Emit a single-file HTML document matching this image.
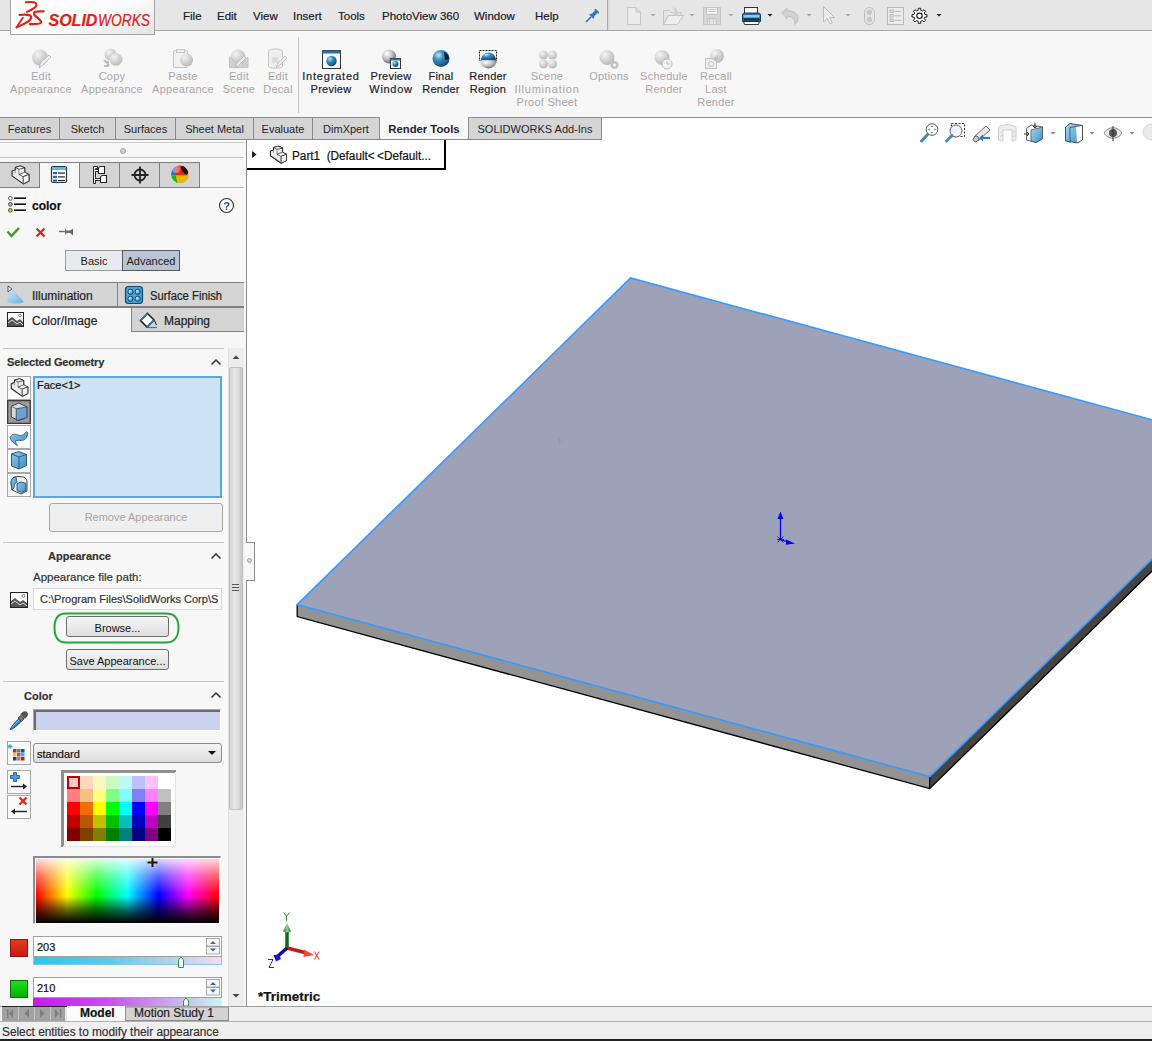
<!DOCTYPE html>
<html><head><meta charset="utf-8">
<style>
*{box-sizing:border-box;margin:0;padding:0}
html,body{width:1152px;height:1041px;overflow:hidden;background:#fff;font-family:"Liberation Sans",sans-serif;font-size:11px;color:#1a1a2a}
.a{position:absolute}
.t{position:absolute;white-space:pre;line-height:1;-webkit-text-stroke:0.2px currentColor}
#menubar{left:0;top:0;width:1152px;height:31px;background:#e6e6e6;border-bottom:1px solid #a9a9a9}
#logo{left:10px;top:-1px;width:145px;height:36px;background:linear-gradient(160deg,#ffffff 0%,#fbfbfb 55%,#e4e4e4 100%);border:1px solid #a6a6a6;border-top:none}
#cmd{left:0;top:31px;width:1152px;height:87px;background:#f7f7f7;border-bottom:1px solid #8d8d8d}
.cm{position:absolute;top:71px;text-align:center;line-height:13px;font-size:11px;white-space:pre;letter-spacing:0.25px;-webkit-text-stroke:0.2px currentColor}
.dis{color:#aaa5a8;-webkit-text-stroke:0 !important}
.en{color:#1e1e2e}
.tab{position:absolute;top:118px;height:22px;background:#d5d5d5;border:1px solid #8a8a8a;border-top:none;border-left:none;font-size:11px;text-align:center;line-height:23px;color:#1e1e2e}
#panel{left:0;top:140px;width:247px;height:866px;background:#f7f7f7;border-right:1px solid #8c8c8c}
#gfx{left:247px;top:118px;width:905px;height:888px;background:#fff}
#btabs{left:0;top:1006px;width:1152px;height:16px;background:#f0f0f0;border-top:1px solid #a0a0a0}
#status{left:0;top:1021px;width:1152px;height:20px;background:#f0f0f0;border-top:1px solid #b0b0b0;border-bottom:2px solid #222}
</style></head><body>

<!-- graphics -->
<div id="gfx" class="a"></div>
<!-- menu bar -->
<div id="menubar" class="a"></div>
<div class="a" style="left:607px;top:0;width:1px;height:30px;background:#a8a8a8"></div><div class="a" style="left:608px;top:0;width:3px;height:30px;background:linear-gradient(90deg,#d8d8d8,#e6e6e6)"></div>

<!-- command manager -->
<div id="cmd" class="a"></div>
<div id="logo" class="a"></div>
<div class="a" style="left:298px;top:37px;width:1px;height:76px;background:#c8c8c8"></div>

<!-- logo -->
<svg class="a" style="left:10px;top:0" width="40" height="32" viewBox="10 0 40 32">
  <g fill="none" stroke="#dc2318" stroke-linecap="round" stroke-linejoin="round">
    <path d="M25.8,2.3 C29.5,1.9 33.5,1.7 35.4,2.8 C37.3,4 36.5,6.3 34,8.1 C31.5,9.8 29.2,10.9 27,11.9" stroke-width="2.1"/>
    <path d="M19.6,15 C23.5,14.6 28,14.4 30.3,15.7 C32,16.8 31.3,19.3 28.3,21.4 C24.8,23.8 20.5,25.8 16.6,27.3" stroke-width="2.2"/>
    <path d="M22.8,17.8 L16.6,27.3" stroke-width="1.8"/>
    <path d="M43.6,11.4 C40,11.2 36.5,11.2 34.8,12 C33.2,13 34,15 36.5,17 C39,19 41.6,20.6 41,22.6 C40.4,24.1 37,24.2 30,24" stroke-width="2.3"/>
  </g>
</svg>
<div class="t" style="left:48.5px;top:12.5px;font-size:16px;font-weight:bold;font-style:italic;color:#dc2318;transform:scaleX(1.0);transform-origin:0 0">SOLID</div>
<div class="t" style="left:97.5px;top:12.5px;font-size:16px;font-style:italic;color:#dc2318;transform:scaleX(0.86);transform-origin:0 0">WORKS</div>

<!-- menu -->
<div class="t" style="left:183px;top:11px;font-size:11.5px">File</div>
<div class="t" style="left:217px;top:11px;font-size:11.5px">Edit</div>
<div class="t" style="left:253px;top:11px;font-size:11.5px">View</div>
<div class="t" style="left:293px;top:11px;font-size:11.5px">Insert</div>
<div class="t" style="left:338px;top:11px;font-size:11.5px">Tools</div>
<div class="t" style="left:382px;top:11px;font-size:11.5px">PhotoView 360</div>
<div class="t" style="left:474px;top:11px;font-size:11.5px">Window</div>
<div class="t" style="left:535px;top:11px;font-size:11.5px">Help</div>
<svg class="a" style="left:585px;top:8px" width="15" height="15" viewBox="0 0 15 15">
  <path d="M1,14 L6,9" stroke="#2a6fb5" stroke-width="1.6"/>
  <path d="M4,6.5 L8.5,11 L9.5,8 L12.5,5 L13.8,5.8 L14,4 L11,1 L9.2,1.2 L10,2.5 L7,5.5 Z" fill="#2f78c4"/>
</svg>

<!-- quick access -->
<svg class="a" style="left:620px;top:4px" width="330" height="24" viewBox="620 4 330 24">
  <g fill="#ececec" stroke="#c4c4c4" stroke-width="1">
    <path d="M627.5,7.5 H636 L640.5,12 V24.5 H627.5 Z"/>
    <path d="M636,7.5 V12 H640.5" fill="#dcdcdc"/>
    <path d="M663.5,10.5 H669 L671,12.5 H681 V15.5 H668 L663.5,24.5 Z" fill="#e6e6e6"/>
    <path d="M668.5,15.5 H683.5 L677.5,24.5 H663.5 Z" fill="#efefef"/>
    <path d="M703.5,7.5 H720.5 V24.5 H703.5 Z" fill="#d8d8d8"/>
    <path d="M706.5,7.5 H717.5 V14.5 H706.5 Z" fill="#f4f4f4"/>
    <path d="M707.5,18.5 H716.5 V24.5 H707.5 Z" fill="#e4e4e4"/>
  </g>
  <path d="M707.5,9.5 H716.5 M707.5,11.5 H716.5 M709.5,19 V24 M713.5,19 V24" stroke="#c4c4c4" stroke-width="0.8"/>
  <path d="M673,7 C676,7.5 677.5,9.5 677.5,12 L680,12 L676,16 L672,12 L674.5,12 C674.5,10 674,8.5 673,7 Z" fill="#cfcfcf"/>
  <path d="M782,12.5 L787,8 V10.8 C793,10.5 798,13.5 798,18 C798,21 796.5,23 794.5,24.5 C795.5,21.5 794,16.5 787,16.2 V19 Z" fill="#d2d2d2" stroke="#b8b8b8" stroke-width="0.8" stroke-linejoin="round"/>
  <path d="M823.5,6.5 V22 L827,18.5 L830,24 L832.3,23 L829.5,17.5 H834.5 Z" fill="#ededed" stroke="#b4b4b4" stroke-width="0.9" stroke-linejoin="round"/>
  <rect x="864.5" y="7.5" width="10" height="17" rx="5" fill="#e4e4e4" stroke="#c0c0c0" stroke-width="1"/>
  <circle cx="869.5" cy="12.3" r="2.5" fill="#c8c8c8"/><circle cx="869.5" cy="19.5" r="2.5" fill="#c8c8c8"/>
  <rect x="887.5" y="7.5" width="16" height="17" fill="#ececec" stroke="#b8b8b8" stroke-width="1"/>
  <g fill="#e0e0e0" stroke="#b0b0b0" stroke-width="0.8"><rect x="890" y="10" width="3.2" height="2.6"/><rect x="890" y="14.5" width="3.2" height="2.6"/><rect x="890" y="19" width="3.2" height="2.6"/></g>
  <path d="M894.5,11.3 H901 M894.5,15.8 H901 M894.5,20.3 H901" stroke="#b0b0b0" stroke-width="0.9"/>
  <!-- printer -->
  <rect x="744.5" y="7.5" width="13" height="7" fill="#f6f6f6" stroke="#333" stroke-width="1"/>
  <path d="M742.5,15 C742.5,13.5 743.5,13 745,13 H758 C759.5,13 760.5,13.5 760.5,15 V21.5 H742.5 Z" fill="#2a6ea8" stroke="#0f3050" stroke-width="0.9"/>
  <rect x="743.5" y="15" width="16" height="2.5" fill="#8ccbf0"/>
  <rect x="743.5" y="18.5" width="16" height="2" fill="#0c2a44"/>
  <path d="M743.5,21.5 H759.5 L758.5,24.5 H744.5 Z" fill="#fff" stroke="#222" stroke-width="0.9"/>
  <!-- gear -->
  <path d="M927.01,14.61 L927.01,16.99 L924.95,17.11 L924.27,18.73 L925.65,20.27 L923.97,21.95 L922.43,20.57 L920.81,21.25 L920.69,23.31 L918.31,23.31 L918.19,21.25 L916.57,20.57 L915.03,21.95 L913.35,20.27 L914.73,18.73 L914.05,17.11 L911.99,16.99 L911.99,14.61 L914.05,14.49 L914.73,12.87 L913.35,11.33 L915.03,9.65 L916.57,11.03 L918.19,10.35 L918.31,8.29 L920.69,8.29 L920.81,10.35 L922.43,11.03 L923.97,9.65 L925.65,11.33 L924.27,12.87 L924.95,14.49 Z" fill="#fafafa" stroke="#1a1a1a" stroke-width="1" stroke-linejoin="round"/>
  <circle cx="919.5" cy="15.8" r="2.7" fill="none" stroke="#1a1a1a" stroke-width="1.1"/>
  <g fill="#a8a8a8">
    <path d="M650.5,14 h5 l-2.5,2.5z M689.5,14 h5 l-2.5,2.5z M728.5,14 h5 l-2.5,2.5z M806.5,14 h5 l-2.5,2.5z M845.5,14 h5 l-2.5,2.5z"/>
  </g>
  <path d="M767.5,14 h5 l-2.5,2.5z M936.5,14 h5 l-2.5,2.5z" fill="#222"/>
</svg>

<!-- command manager buttons -->
<svg class="a" style="left:0;top:40px" width="760" height="32" viewBox="0 40 760 32">
  <defs>
    <radialGradient id="gs" cx="0.35" cy="0.3" r="0.75"><stop offset="0" stop-color="#f4f4f4"/><stop offset="0.6" stop-color="#cfcfcf"/><stop offset="1" stop-color="#b8b8b8"/></radialGradient>
    <radialGradient id="bs" cx="0.35" cy="0.3" r="0.8"><stop offset="0" stop-color="#bfe6ff"/><stop offset="0.35" stop-color="#3c8fc4"/><stop offset="1" stop-color="#0d3d66"/></radialGradient>
    <radialGradient id="ws" cx="0.35" cy="0.3" r="0.8"><stop offset="0" stop-color="#ffffff"/><stop offset="0.5" stop-color="#bdbdbd"/><stop offset="1" stop-color="#555"/></radialGradient>
  </defs>
  <!-- Edit Appearance -->
  <circle cx="40" cy="57.5" r="8" fill="url(#gs)"/>
  <path d="M39,68 L41,62 L49,55 L51,57 L43,65 Z" fill="#eee" stroke="#bdbdbd" stroke-width="1"/>
  <!-- Copy Appearance -->
  <circle cx="110.5" cy="54.5" r="6" fill="url(#gs)"/>
  <circle cx="116" cy="59.5" r="6.3" fill="url(#gs)" stroke="#ddd" stroke-width="0.6"/>
  <path d="M104,60 L109,65 M108,61 V66 H104" stroke="#bdbdbd" stroke-width="2" fill="none"/>
  <!-- Paste Appearance -->
  <rect x="173.5" y="50.5" width="14" height="17" rx="1.5" fill="#f1f1f1" stroke="#c4c4c4"/>
  <rect x="176.5" y="49.5" width="8" height="3" fill="#eee" stroke="#c4c4c4"/>
  <circle cx="186.5" cy="60" r="6.5" fill="url(#gs)"/>
  <!-- Edit Scene -->
  <circle cx="238" cy="57" r="7.5" fill="url(#gs)"/>
  <path d="M229.5,57 V67.5 H248 V57 L243,63 L238.5,67 L234,61 Z" fill="#cfcfcf" stroke="#c4c4c4"/>
  <path d="M235,68 L237,63 L244,56 L246,58 L239,65 Z" fill="#eee" stroke="#bdbdbd"/>
  <!-- Edit Decal -->
  <path d="M268.5,51.5 C268.5,48 282.5,48 282.5,51.5 V66 C282.5,69 268.5,69 268.5,66 Z" fill="#eee" stroke="#c8c8c8"/>
  <rect x="272" y="57" width="6" height="6" fill="#ddd"/>
  <path d="M276,68 L278,63 L285,56 L287,58 L280,65 Z" fill="#eee" stroke="#bdbdbd"/>
  <!-- Integrated Preview -->
  <rect x="322.5" y="50.5" width="18" height="18" fill="#f7f7f7" stroke="#333" stroke-width="1"/>
  <rect x="322.5" y="50.5" width="18" height="3" fill="#2f6fa8"/>
  <circle cx="331.5" cy="61" r="5.2" fill="url(#bs)"/>
  <!-- Preview Window -->
  <circle cx="389" cy="56.5" r="7" fill="url(#ws)"/>
  <rect x="390.5" y="58.5" width="10" height="10" fill="#f7f7f7" stroke="#333"/>
  <rect x="390.5" y="58.5" width="10" height="2" fill="#2f6fa8"/>
  <circle cx="395.5" cy="64" r="3" fill="url(#bs)"/>
  <!-- Final Render -->
  <circle cx="441" cy="58.5" r="8.5" fill="url(#bs)"/>
  <path d="M444,52 C447,53 449,56 449,59 L445,60 Z" fill="#0b1f33"/>
  <!-- Render Region -->
  <rect x="479.5" y="50.5" width="17" height="10" fill="none" stroke="#222" stroke-dasharray="2,1"/>
  <path d="M480,60 A8.5,8.5 0 0 0 497,60 Z" fill="url(#ws)"/>
  <path d="M481,60 A7.5,7.5 0 0 1 496,60 Z" fill="url(#bs)"/>
  <!-- Scene Illumination -->
  <circle cx="543.5" cy="55" r="4.5" fill="url(#gs)"/><circle cx="552.5" cy="55" r="4.5" fill="url(#gs)"/>
  <circle cx="543.5" cy="64" r="4.5" fill="url(#gs)"/><circle cx="552.5" cy="64" r="4.5" fill="url(#gs)"/>
  <!-- Options -->
  <circle cx="607" cy="57.5" r="7.5" fill="url(#gs)"/>
  <circle cx="614.5" cy="65" r="4" fill="#c4c4c4"/><circle cx="614.5" cy="65" r="1.6" fill="#f5f5f5"/>
  <!-- Schedule Render -->
  <circle cx="662" cy="57.5" r="7.5" fill="url(#gs)"/>
  <circle cx="667" cy="64" r="5" fill="#f3f3f3" stroke="#bdbdbd"/>
  <path d="M667,61 V64 H670" stroke="#bdbdbd" fill="none"/>
  <!-- Recall Last Render -->
  <circle cx="717" cy="56" r="7" fill="url(#gs)"/>
  <rect x="705.5" y="58.5" width="11" height="10" fill="#eee" stroke="#c4c4c4"/>
  <circle cx="711" cy="64" r="2.5" fill="none" stroke="#c4c4c4"/>
  <path d="M712,59 L718,55 V63 Z" fill="#c4c4c4"/>
</svg>
<div class="cm dis" style="left:1px;width:80px;top:70px">Edit
Appearance</div>
<div class="cm dis" style="left:72px;width:80px;top:70px">Copy
Appearance</div>
<div class="cm dis" style="left:143px;width:80px;top:70px">Paste
Appearance</div>
<div class="cm dis" style="left:219px;width:40px;top:70px">Edit
Scene</div>
<div class="cm dis" style="left:258px;width:40px;top:70px">Edit
Decal</div>
<div class="cm en" style="left:301px;width:60px;top:70px"><span style="letter-spacing:0.8px">Integrated</span>
Preview</div>
<div class="cm en" style="left:361px;width:60px;top:70px">Preview
<span style="letter-spacing:0.7px">Window</span></div>
<div class="cm en" style="left:416px;width:50px;top:70px">Final
Render</div>
<div class="cm en" style="left:463px;width:50px;top:70px">Render
Region</div>
<div class="cm dis" style="left:507px;width:80px;top:70px">Scene
<span style="letter-spacing:0.8px">Illumination</span>
Proof Sheet</div>
<div class="cm dis" style="left:579px;width:60px;top:70px">Options</div>
<div class="cm dis" style="left:634px;width:60px;top:70px">Schedule
Render</div>
<div class="cm dis" style="left:686px;width:60px;top:70px">Recall
Last
Render</div>

<!-- tabs -->
<div class="tab" style="left:0;width:60px">Features</div>
<div class="tab" style="left:60px;width:56px">Sketch</div>
<div class="tab" style="left:116px;width:60px">Surfaces</div>
<div class="tab" style="left:176px;width:78px">Sheet Metal</div>
<div class="tab" style="left:254px;width:59px">Evaluate</div>
<div class="tab" style="left:313px;width:67px">DimXpert</div>
<div class="tab" style="left:380px;width:89px;background:#f7f7f7;font-weight:bold;font-size:11.3px;border-bottom:1px solid #8a8a8a">Render Tools</div>
<div class="a" style="left:380px;top:117px;width:88px;height:1px;background:#f7f7f7"></div>
<div class="tab" style="left:469px;width:133px">SOLIDWORKS Add-Ins</div>


<!-- panel -->
<div id="panel" class="a"></div>
<!-- panel top -->
<div class="a" style="left:0;top:141px;width:244px;height:1px;background:#fdfdfd"></div>
<div class="a" style="left:0;top:142px;width:244px;height:1px;background:#c9c9c9"></div>
<div class="a" style="left:119.5px;top:147.5px;width:6px;height:6px;border-radius:50%;background:#d0d0d0;border:1px solid #a8a8a8"></div>
<div class="a" style="left:0;top:157px;width:244px;height:1px;background:#c4c4c4"></div>
<div class="a" style="left:0;top:158px;width:244px;height:1px;background:#fdfdfd"></div>
<!-- PM tabs -->
<div class="a" style="left:0;top:162px;width:200px;height:26px;background:#d4d4d4;border-top:1px solid #808080;border-bottom:1px solid #808080"></div>
<div class="a" style="left:200px;top:187px;width:44px;height:1px;background:#b8b8b8"></div>
<div class="a" style="left:39px;top:162px;width:1px;height:26px;background:#808080"></div>
<div class="a" style="left:40px;top:163px;width:39px;height:25px;background:#f7f7f7"></div>
<div class="a" style="left:79px;top:162px;width:1px;height:26px;background:#808080"></div>
<div class="a" style="left:119px;top:162px;width:1px;height:26px;background:#808080"></div>
<div class="a" style="left:159px;top:162px;width:1px;height:26px;background:#808080"></div>
<div class="a" style="left:199px;top:162px;width:1px;height:26px;background:#808080"></div>
<svg class="a" style="left:0;top:160px" width="200" height="30" viewBox="0 160 200 30">
  <defs>
    <radialGradient id="dm" cx="0.3" cy="0.3" r="0.8"><stop offset="0" stop-color="#ffffff" stop-opacity="0.6"/><stop offset="0.5" stop-color="#ffffff" stop-opacity="0"/><stop offset="1" stop-color="#000" stop-opacity="0.25"/></radialGradient>
  </defs>
  <!-- part icon -->
  <g transform="translate(7.4,162.6) scale(1.05)" stroke="#1e1e1e" stroke-width="1.00" stroke-linejoin="round">
    <path d="M4.4,8.3 L6,7.4 L7.4,6.9 L7.6,4.6 L12.2,3.2 L14.7,4.1 L16.6,5.1 L16.6,9.2 L18.4,10.4 L20.5,11.3 L20.5,17.5 L15.2,20.3 L4.4,12.7 Z" fill="#ececec"/>
    <path d="M7.6,4.6 L11,6.3 L16.6,5.1 L12.2,3.2 Z" fill="#f8f8f8" stroke-width="0.67"/>
    <path d="M11,11.3 L16.6,9.2 L20.5,11.3 L15,13.4 Z" fill="#fafafa" stroke-width="0.67"/>
    <path d="M15,13.4 L20.5,11.3 V17.5 L15.2,20.3 Z" fill="#f4f4f4" stroke-width="0.67"/>
    <path d="M11,6.3 V11.3 M15,13.4 V20.3 M7.4,6.9 V9.8" fill="none" stroke="#777" stroke-width="0.76"/>
  </g>
  <!-- PM icon -->
  <rect x="51.5" y="166.5" width="15" height="16" rx="1.5" fill="#fff" stroke="#1d3b55" stroke-width="1.2"/>
  <rect x="52" y="167" width="14" height="3" fill="#6fb3dc"/>
  <rect x="53" y="172" width="4" height="2.2" fill="#1f6a9a"/><rect x="58" y="172.5" width="7" height="1.2" fill="#222"/>
  <rect x="53" y="175.8" width="4" height="2.2" fill="#1f6a9a"/><rect x="58" y="176.3" width="7" height="1.2" fill="#222"/>
  <rect x="53" y="179.5" width="4" height="2.2" fill="#1f6a9a"/><rect x="58" y="180" width="7" height="1.2" fill="#222"/>
  <!-- config icon -->
  <path d="M93.5,166.5 H97.5 V168.5 H95.5 V169.5 H98.5 V171.5 H95.5 V178.5 H100.5 V180.5 H95.5 V183.5 H93.5 Z" fill="#fff" stroke="#222" stroke-width="1"/>
  <path d="M98.5,168.5 C98.5,167 99.5,166.5 101,166.5 H104.5 V173.5 H98.5 Z" fill="#fff" stroke="#222" stroke-width="1.1"/>
  <path d="M100.5,177.5 C100.5,176 101.5,175.5 103,175.5 H106.5 V182.5 H100.5 Z" fill="#fff" stroke="#222" stroke-width="1.1"/>
  <!-- dimxpert -->
  <g fill="none" stroke="#222">
    <circle cx="140" cy="175" r="5.5" stroke-width="1.8"/>
    <path d="M140,166.5 V183.5 M131.5,175 H148.5" stroke-width="1.8"/>
  </g>
  <!-- display manager -->
  <clipPath id="dmc"><circle cx="180" cy="174.3" r="8.8"/></clipPath>
  <g clip-path="url(#dmc)">
    <rect x="170" y="164" width="20" height="20" fill="#d9a56a"/>
    <path d="M170,164 H176.5 C176,168 175.8,172 176,175.5 H170 Z" fill="#2a6fc8"/>
    <path d="M176.5,164 H186 C184,168 185,172 187,175.5 H176 C175.8,172 176,168 176.5,164 Z" fill="#e02a1a"/>
    <path d="M170,175.5 H176 C176.5,179 177.5,182 179,185 H170 Z" fill="#10c010"/>
    <path d="M176,175.5 H189 C188.5,179 186,183 183,185 H179 C177.5,182 176.5,179 176,175.5 Z" fill="#e8b800"/>
    <ellipse cx="184.6" cy="170.2" rx="2.4" ry="4.8" transform="rotate(-35 184.6 170.2)" fill="#111"/>
    <circle cx="176" cy="169" r="4" fill="#fff" opacity="0.35"/>
  </g>
</svg>

<!-- header -->
<svg class="a" style="left:6px;top:194px" width="24" height="20" viewBox="6 194 24 20">
  <circle cx="10.4" cy="198.3" r="1.9" fill="#fff" stroke="#333" stroke-width="0.8"/>
  <circle cx="10.4" cy="204.3" r="1.9" fill="#7cc4ec" stroke="#333" stroke-width="0.8"/>
  <circle cx="10.4" cy="210.3" r="1.9" fill="#f5c400" stroke="#333" stroke-width="0.8"/>
  <rect x="14" y="197.4" width="12" height="1.6" fill="#111"/>
  <rect x="14" y="203.4" width="12" height="1.6" fill="#111"/>
  <rect x="14" y="209.4" width="12" height="1.6" fill="#111"/>
</svg>
<div class="t" style="left:32px;top:200px;font-size:12px;font-weight:bold;color:#111">color</div>
<svg class="a" style="left:218px;top:197px" width="17" height="17" viewBox="0 0 17 17">
  <circle cx="8.5" cy="8.5" r="7" fill="#fdfdfd" stroke="#333" stroke-width="1.1"/>
  <text x="8.5" y="12.6" text-anchor="middle" font-family="Liberation Sans" font-weight="bold" font-size="11" fill="#1f4f8a">?</text>
</svg>
<svg class="a" style="left:5px;top:224px" width="72" height="16" viewBox="5 224 72 16">
  <path d="M7.5,231.5 L11.5,236 L19,228" fill="none" stroke="#3f9a22" stroke-width="2.4"/>
  <path d="M36.5,228.5 L44.5,236.5 M44.5,228.5 L36.5,236.5" stroke="#e1251b" stroke-width="2.2"/>
  <path d="M59,231.5 H65" stroke="#6b6b6b" stroke-width="1.4"/>
  <path d="M65,228.5 L66.5,230.5 H70 L73,228.5 V235.5 L70,233 H66.5 L65,235" fill="#6b6b6b"/>
</svg>
<div class="a" style="left:65px;top:250px;width:58px;height:21px;background:#e7eaee;border:1px solid #9a9a9a;font-size:11px;line-height:21px;text-align:center;color:#222">Basic</div>
<div class="a" style="left:122px;top:250px;width:58px;height:21px;background:#b9c4d5;border:1px solid #555a62;font-size:11px;line-height:21px;text-align:center;color:#222">Advanced</div>

<!-- appearance tabs -->
<div class="a" style="left:0;top:282px;width:244px;height:26px;background:#d4d4d4;border-top:1px solid #808080;border-bottom:2px solid #808080"></div>
<div class="a" style="left:117px;top:282px;width:1px;height:25px;background:#808080"></div>
<div class="a" style="left:131px;top:308px;width:113px;height:24px;background:#d4d4d4;border-left:1px solid #808080;border-bottom:1px solid #808080"></div>
<div class="t" style="left:32px;top:290px;font-size:12px;color:#222">Illumination</div>
<div class="t" style="left:150px;top:290px;font-size:12px;color:#222;transform:scaleX(0.94);transform-origin:0 0">Surface Finish</div>
<div class="t" style="left:32px;top:315px;font-size:12px;color:#222">Color/Image</div>
<div class="t" style="left:164px;top:315px;font-size:12px;color:#222">Mapping</div>
<svg class="a" style="left:0;top:282px" width="244" height="50" viewBox="0 282 244 50">
  <defs>
    <linearGradient id="lb" x1="0" y1="0" x2="1" y2="1"><stop offset="0" stop-color="#cfe8f7"/><stop offset="1" stop-color="#5aaee0"/></linearGradient>
    <radialGradient id="sf" cx="0.3" cy="0.3" r="0.8"><stop offset="0" stop-color="#c8f0ff"/><stop offset="1" stop-color="#2a7fb0"/></radialGradient>
  </defs>
  <!-- illumination -->
  <path d="M8,286 L12,289 L8,292 Z" fill="#fff" stroke="#333" stroke-width="0.8"/>
  <path d="M8.5,292 L13,289.5 L24,302 C21,304 12,304 7,302.5 Z" fill="url(#lb)" opacity="0.9"/>
  <!-- surface finish -->
  <rect x="125.5" y="286.5" width="17" height="17" rx="3" fill="#4aa3d3" stroke="#0f4a6e" stroke-width="1.2"/>
  <circle cx="130.5" cy="291.8" r="2.6" fill="url(#sf)" stroke="#0c3f5e" stroke-width="0.9"/>
  <circle cx="137.7" cy="291.8" r="2.6" fill="url(#sf)" stroke="#0c3f5e" stroke-width="0.9"/>
  <circle cx="130.5" cy="298.8" r="2.6" fill="url(#sf)" stroke="#0c3f5e" stroke-width="0.9"/>
  <circle cx="137.7" cy="298.8" r="2.6" fill="url(#sf)" stroke="#0c3f5e" stroke-width="0.9"/>
  <!-- color/image -->
  <rect x="7.5" y="312.5" width="16" height="14" fill="#fff" stroke="#222" stroke-width="1"/>
  <path d="M8,326 V320 L12,317 L17,321 L20,319 L23,322 V326 Z" fill="#555"/>
  <path d="M8,323 L12,320 L17,324 L20,322 L23,325" fill="none" stroke="#fff" stroke-width="0.8"/>
  <circle cx="20" cy="315.5" r="1.3" fill="none" stroke="#444" stroke-width="0.7"/>
  <!-- mapping -->
  <path d="M147.5,313.5 L154,320 L147,327 L140.5,320.5 Z" fill="#fff" stroke="#222" stroke-width="1.6"/>
  <path d="M140.5,320.5 L147.5,313.5 M147,327 L154,320" stroke="#2a78b8" stroke-width="1.6"/>
  <path d="M148,327.5 H157" stroke="#2a78b8" stroke-width="1.2"/>
  <path d="M154.5,320.5 L156.5,325" stroke="#111" stroke-width="1"/>
</svg>



<!-- selected geometry -->
<div class="a" style="left:3px;top:348px;width:221px;height:1px;background:#c4c4c4"></div>
<div class="t" style="left:7px;top:357px;font-size:11px;font-weight:bold;color:#333;letter-spacing:-0.15px">Selected Geometry</div>
<svg class="a" style="left:205px;top:352px" width="22" height="16" viewBox="205 352 22 16">
  <path d="M211.5,364.5 L216,360 L220.5,364.5" fill="none" stroke="#333" stroke-width="1.5"/>
</svg>
<!-- scrollbar -->
<div class="a" style="left:228px;top:348px;width:16px;height:658px;background:#ededed;border-left:1px solid #e0e0e0"></div>
<svg class="a" style="left:228px;top:350px" width="16" height="12" viewBox="228 350 16 12">
  <path d="M232.5,359 L236,355.5 L239.5,359 Z" fill="#444"/>
</svg>
<div class="a" style="left:229px;top:367px;width:14px;height:443px;background:linear-gradient(90deg,#d4d4d4,#e8e8e8 40%,#dcdcdc 70%,#c4c4c4);border:1px solid #c0c0c0;border-radius:2px"></div>
<svg class="a" style="left:228px;top:990px" width="16" height="12" viewBox="228 990 16 12">
  <path d="M232.5,994 L236,997.5 L239.5,994 Z" fill="#444"/>
</svg>

<div class="a" style="left:7px;top:376px;width:24px;height:24px;background:#fbfbfb;border:1px solid #a8a8a8"></div>
<div class="a" style="left:7px;top:400px;width:24px;height:24px;background:#9c9c9c;border:1px solid #3c3c3c;box-shadow:inset 0 0 0 1px #7a7a7a"></div>
<div class="a" style="left:7px;top:425px;width:24px;height:24px;background:#fbfbfb;border:1px solid #a8a8a8"></div>
<div class="a" style="left:7px;top:449px;width:24px;height:24px;background:#fbfbfb;border:1px solid #a8a8a8"></div>
<div class="a" style="left:7px;top:473px;width:24px;height:24px;background:#fbfbfb;border:1px solid #a8a8a8"></div>
<svg class="a" style="left:7px;top:376px" width="24" height="122" viewBox="7 376 24 122">
  <defs>
    <linearGradient id="cb" x1="0" y1="0" x2="1" y2="1"><stop offset="0" stop-color="#8cc8ea"/><stop offset="1" stop-color="#3c8cc0"/></linearGradient>
  </defs>
  <!-- part -->
  <g transform="translate(6.7,375.4) scale(1.03)" stroke="#1e1e1e" stroke-width="1.02" stroke-linejoin="round">
    <path d="M4.4,8.3 L6,7.4 L7.4,6.9 L7.6,4.6 L12.2,3.2 L14.7,4.1 L16.6,5.1 L16.6,9.2 L18.4,10.4 L20.5,11.3 L20.5,17.5 L15.2,20.3 L4.4,12.7 Z" fill="#ececec"/>
    <path d="M7.6,4.6 L11,6.3 L16.6,5.1 L12.2,3.2 Z" fill="#f8f8f8" stroke-width="0.68"/>
    <path d="M11,11.3 L16.6,9.2 L20.5,11.3 L15,13.4 Z" fill="#fafafa" stroke-width="0.68"/>
    <path d="M15,13.4 L20.5,11.3 V17.5 L15.2,20.3 Z" fill="#f4f4f4" stroke-width="0.68"/>
    <path d="M11,6.3 V11.3 M15,13.4 V20.3 M7.4,6.9 V9.8" fill="none" stroke="#777" stroke-width="0.78"/>
  </g>
  <!-- face -->
  <path d="M11.25,406.25 L18.75,403 L26.9,406.9 V417.5 L18.75,420.6 L11.25,416.9 Z" fill="#d8d8d8" stroke="#333" stroke-width="0.9" stroke-linejoin="round"/>
  <path d="M16.25,408.75 L26.9,406.9 V417.5 L16.25,420.6 Z" fill="#6e9fcf" stroke="#2d4a66" stroke-width="0.8"/>
  <path d="M11.25,406.25 L16.25,408.75" stroke="#555" stroke-width="0.8"/>
  <!-- surface -->
  <path d="M10,437.5 C12,434 15,433.5 18,435 C21,436.5 24,435 26.5,431.5 L27.8,433 C27.5,437.5 25,440.5 21.5,440.5 C19,440.5 17,440 15.5,441 C15.5,442.5 16.5,444 17.5,445.5 C14,444 11,441 10,437.5 Z" fill="url(#cb)" stroke="#1d5a80" stroke-width="0.8" stroke-linejoin="round"/>
  <!-- body -->
  <path d="M11.5,454 L18.5,451.5 L26.5,454.5 V465.5 L19,469 L11.5,466 Z" fill="url(#cb)" stroke="#1d4f70" stroke-width="0.9"/>
  <path d="M11.5,454 L19,457 L26.5,454.5 M19,457 V469" fill="none" stroke="#1d4f70" stroke-width="0.8"/>
  <!-- component -->
  <path d="M11,483 C11,478 14,476.5 18,476.5 L24,477 C26,478 27,480 27,482 V491 L21,494 L12,490 Z" fill="#f0f0f0" stroke="#333" stroke-width="0.9"/>
  <path d="M11,483 C11,479 13,477.5 16,477 L17,482 C15,483 14,485 14,488 L12,490 Z" fill="url(#cb)" stroke="#1d4f70" stroke-width="0.8"/>
  <path d="M17,483.5 L21.5,482 L26,483.5 V490.5 L21.5,492.5 L17,490.5 Z" fill="url(#cb)" stroke="#1d4f70" stroke-width="0.9"/>
</svg>
<div class="a" style="left:33px;top:376px;width:189px;height:122px;background:#cfe3f6;border:2px solid #55a7e6"></div>
<div class="t" style="left:37px;top:380px;font-size:11px;color:#111">Face&lt;1&gt;</div>
<div class="a" style="left:49px;top:503px;width:174px;height:29px;background:#efefef;border:1px solid #a9a9a0;border-radius:3px;font-size:11px;line-height:27px;text-align:center;color:#a4a4a4">Remove Appearance</div>

<!-- appearance -->
<div class="a" style="left:3px;top:542px;width:221px;height:1px;background:#c4c4c4"></div>
<div class="t" style="left:48px;top:551px;font-size:11px;font-weight:bold;color:#333">Appearance</div>
<svg class="a" style="left:205px;top:546px" width="22" height="16" viewBox="205 546 22 16">
  <path d="M211.5,558.5 L216,554 L220.5,558.5" fill="none" stroke="#333" stroke-width="1.5"/>
</svg>
<div class="t" style="left:33px;top:572px;font-size:11.5px;color:#333">Appearance file path:</div>
<svg class="a" style="left:9px;top:590px" width="20" height="20" viewBox="9 590 20 20">
  <rect x="10.5" y="592.5" width="17" height="15" fill="#fff" stroke="#222" stroke-width="1"/>
  <path d="M11,607 V601 L15,598 L20,602 L23,600 L27,603 V607 Z" fill="#555"/>
  <path d="M11,604 L15,601 L20,605 L23,603 L27,606" fill="none" stroke="#fff" stroke-width="0.8"/>
  <circle cx="23.5" cy="595.8" r="1.4" fill="none" stroke="#444" stroke-width="0.7"/>
</svg>
<div class="a" style="left:33px;top:588px;width:189px;height:22px;background:#fff;border:1px solid #d9d9d9;overflow:hidden">
  <div class="t" style="left:6px;top:5px;font-size:11px;color:#333">C:\Program Files\SolidWorks Corp\S</div>
</div>
<div class="a" style="left:66px;top:616px;width:103px;height:21px;background:linear-gradient(#f6f6f6,#dedede);border:1px solid #6e6e6e;border-radius:3px;font-size:11px;line-height:22px;text-align:center;color:#111">Browse...</div>
<svg class="a" style="left:50px;top:609px" width="134" height="38" viewBox="50 609 134 38">
  <path d="M66,613.5 H166 C174,613.5 178.5,618 178.5,627.5 C178.5,637 174,642.5 166,642.5 H66 C58,642.5 54.5,637 54.5,627.5 C54.5,618 58,613.5 66,613.5 Z" fill="none" stroke="#25a83a" stroke-width="2"/>
</svg>
<div class="a" style="left:66px;top:649px;width:103px;height:21px;background:linear-gradient(#f6f6f6,#dedede);border:1px solid #6e6e6e;border-radius:3px;font-size:11px;line-height:22px;text-align:center;color:#111">Save Appearance...</div>

<!-- color -->
<div class="a" style="left:3px;top:681px;width:221px;height:1px;background:#c4c4c4"></div>
<div class="t" style="left:24px;top:691px;font-size:11px;font-weight:bold;color:#333">Color</div>
<svg class="a" style="left:205px;top:685px" width="22" height="16" viewBox="205 685 22 16">
  <path d="M211.5,697.5 L216,693 L220.5,697.5" fill="none" stroke="#333" stroke-width="1.5"/>
</svg>
<svg class="a" style="left:8px;top:708px" width="22" height="24" viewBox="8 708 22 24">
  <path d="M10.2,729.8 C10.5,727.5 15,722 19,718.5 L21.5,721 C18,725 12.5,729.5 10.2,729.8 Z" fill="#3a86b0" stroke="#0f3a55" stroke-width="0.9"/>
  <path d="M12,727.5 C14,725 16.5,722.5 19,720" stroke="#8fd0ee" stroke-width="0.9"/>
  <path d="M18,718 L20.5,715.5 L24,719 L21.5,721.5 Z" fill="#777" stroke="#333" stroke-width="0.8"/>
  <path d="M21,714.5 C22,712 25.5,711 27,712.5 C28.2,714 27,717.5 24.5,718.2 Z" fill="#555" stroke="#333" stroke-width="0.8"/>
</svg>
<div class="a" style="left:33px;top:709px;width:188px;height:22px;background:#cbd2ee;border:1px solid #a8a8a8;border-right-color:#fff;border-bottom-color:#fff;box-shadow:inset 2px 2px 0 #6a6a6a"></div>

<!-- color section 2 -->
<div class="a" style="left:7px;top:741px;width:24px;height:24px;background:#fbfbfb;border:1px solid #a8a8a8"></div>
<svg class="a" style="left:7px;top:741px" width="24" height="24" viewBox="7 741 24 24">
  <path d="M10,744 V749 M7.5,746.5 H12.5 M8.2,744.7 L11.8,748.3 M11.8,744.7 L8.2,748.3" stroke="#3a8fd0" stroke-width="0.9"/>
  <rect x="13" y="749" width="3.5" height="3.5" fill="#e02020"/><rect x="17" y="749" width="3.5" height="3.5" fill="#20b020"/><rect x="21" y="749" width="3.5" height="3.5" fill="#2040e0"/>
  <rect x="13" y="753" width="3.5" height="3.5" fill="#f0d000"/><rect x="17" y="753" width="3.5" height="3.5" fill="#e020e0"/><rect x="21" y="753" width="3.5" height="3.5" fill="#20c0e0"/>
  <rect x="13" y="757" width="3.5" height="3.5" fill="#2030c0"/><rect x="17" y="757" width="3.5" height="3.5" fill="#e08020"/><rect x="21" y="757" width="3.5" height="3.5" fill="#c02020"/>
</svg>
<div class="a" style="left:33px;top:743px;width:189px;height:20px;background:linear-gradient(#f4f4f4,#dcdcdc);border:1px solid #8a8a8a;border-radius:3px"></div>
<div class="t" style="left:37px;top:749px;font-size:11px;color:#111">standard</div>
<svg class="a" style="left:206px;top:748px" width="12" height="10" viewBox="0 0 12 10"><path d="M2,3 H10 L6,7 Z" fill="#111"/></svg>

<div class="a" style="left:7px;top:770px;width:24px;height:24px;background:#fbfbfb;border:1px solid #a8a8a8"></div>
<div class="a" style="left:7px;top:795px;width:24px;height:24px;background:#fbfbfb;border:1px solid #a8a8a8"></div>
<svg class="a" style="left:7px;top:770px" width="24" height="50" viewBox="7 770 24 50">
  <path d="M13.5,772.5 H16.5 V775.5 H19.5 V778.5 H16.5 V781.5 H13.5 V778.5 H10.5 V775.5 H13.5 Z" fill="#4a9be0" stroke="#1d4f80" stroke-width="0.8"/>
  <path d="M11,786.5 H26" stroke="#222" stroke-width="1.4"/><path d="M23,783.5 L27,786.5 L23,789.5 Z" fill="#222"/>
  <path d="M19.5,797.5 L26.5,804.5 M26.5,797.5 L19.5,804.5" stroke="#e02a20" stroke-width="2.4"/>
  <path d="M13,811.5 H27" stroke="#222" stroke-width="1.4"/><path d="M15,808.5 L11,811.5 L15,814.5 Z" fill="#222"/>
</svg>

<svg class="a" style="left:61px;top:770px" width="116" height="78" viewBox="61 770 116 78">
  <rect x="61" y="770" width="115" height="77" fill="#f6f6f6"/>
  <rect x="64" y="773" width="111" height="73" fill="#fff"/>
  <path d="M62.5,847 V771.5 H176" fill="none" stroke="#8f8f8f" stroke-width="3"/>
  <path d="M175.5,772 V846.5 H63" fill="none" stroke="#e4e4e4" stroke-width="1"/>
  <rect x="67" y="776" width="13" height="13" fill="#ffc8c8"/>
  <rect x="80" y="776" width="13" height="13" fill="#fcd8c0"/>
  <rect x="93" y="776" width="13" height="13" fill="#faf8c0"/>
  <rect x="106" y="776" width="13" height="13" fill="#c8fcc0"/>
  <rect x="119" y="776" width="13" height="13" fill="#c0f8f8"/>
  <rect x="132" y="776" width="13" height="13" fill="#c0c0ff"/>
  <rect x="145" y="776" width="13" height="13" fill="#ffc0ff"/>
  <rect x="158" y="776" width="13" height="13" fill="#ffffff"/>
  <rect x="67" y="789" width="13" height="13" fill="#ff8080"/>
  <rect x="80" y="789" width="13" height="13" fill="#f8c080"/>
  <rect x="93" y="789" width="13" height="13" fill="#ffff80"/>
  <rect x="106" y="789" width="13" height="13" fill="#80ff80"/>
  <rect x="119" y="789" width="13" height="13" fill="#80ffff"/>
  <rect x="132" y="789" width="13" height="13" fill="#8080ff"/>
  <rect x="145" y="789" width="13" height="13" fill="#ff80ff"/>
  <rect x="158" y="789" width="13" height="13" fill="#c0c0c0"/>
  <rect x="67" y="802" width="13" height="13" fill="#ff0000"/>
  <rect x="80" y="802" width="13" height="13" fill="#ef7000"/>
  <rect x="93" y="802" width="13" height="13" fill="#ffff00"/>
  <rect x="106" y="802" width="13" height="13" fill="#00ff00"/>
  <rect x="119" y="802" width="13" height="13" fill="#00ffff"/>
  <rect x="132" y="802" width="13" height="13" fill="#0000ff"/>
  <rect x="145" y="802" width="13" height="13" fill="#ff00ff"/>
  <rect x="158" y="802" width="13" height="13" fill="#808080"/>
  <rect x="67" y="815" width="13" height="13" fill="#c00000"/>
  <rect x="80" y="815" width="13" height="13" fill="#b85800"/>
  <rect x="93" y="815" width="13" height="13" fill="#c0c000"/>
  <rect x="106" y="815" width="13" height="13" fill="#00c000"/>
  <rect x="119" y="815" width="13" height="13" fill="#00c0c0"/>
  <rect x="132" y="815" width="13" height="13" fill="#0000c0"/>
  <rect x="145" y="815" width="13" height="13" fill="#c000c0"/>
  <rect x="158" y="815" width="13" height="13" fill="#404040"/>
  <rect x="67" y="828" width="13" height="13" fill="#800000"/>
  <rect x="80" y="828" width="13" height="13" fill="#804000"/>
  <rect x="93" y="828" width="13" height="13" fill="#808000"/>
  <rect x="106" y="828" width="13" height="13" fill="#008000"/>
  <rect x="119" y="828" width="13" height="13" fill="#008080"/>
  <rect x="132" y="828" width="13" height="13" fill="#000080"/>
  <rect x="145" y="828" width="13" height="13" fill="#800080"/>
  <rect x="158" y="828" width="13" height="13" fill="#000000"/>
  <rect x="68" y="777" width="11" height="11" fill="none" stroke="#c00000" stroke-width="2"/>
</svg>

<!-- spectrum -->
<div class="a" style="left:33px;top:856px;width:188px;height:68px;background:#f4f4f4;border-top:2px solid #8c8c8c;border-left:2px solid #8c8c8c;border-right:1px solid #fff;border-bottom:1px solid #fff"></div>
<div class="a" style="left:36px;top:859px;width:183px;height:64px;background:linear-gradient(180deg,rgba(255,255,255,0.85) 0%,rgba(255,255,255,0.4) 25%,rgba(255,255,255,0) 55%,rgba(0,0,0,0) 58%,rgba(0,0,0,0.6) 80%,rgba(0,0,0,1) 100%),linear-gradient(90deg,#ff0000 0%,#ffff00 17%,#00ff00 33%,#00ffff 50%,#0000ff 67%,#ff00ff 83%,#ff0000 100%)"></div>
<svg class="a" style="left:144px;top:856px" width="16" height="16" viewBox="144 856 16 16">
  <path d="M152.5,858 V867 M147.5,862.5 H157.5" stroke="#221a00" stroke-width="2"/>
</svg>

<!-- RGB inputs -->
<svg class="a" style="left:9px;top:938px" width="20" height="62" viewBox="9 938 20 62">
  <defs>
    <linearGradient id="rs" x1="0" y1="0" x2="0" y2="1"><stop offset="0" stop-color="#e83a20"/><stop offset="1" stop-color="#c81810"/></linearGradient>
    <linearGradient id="gsw" x1="0" y1="0" x2="0" y2="1"><stop offset="0" stop-color="#20e020"/><stop offset="1" stop-color="#00b000"/></linearGradient>
  </defs>
  <rect x="10.5" y="939.5" width="17" height="17" fill="url(#rs)" stroke="#8a1a10" stroke-width="1"/>
  <rect x="10.5" y="980.5" width="17" height="17" fill="url(#gsw)" stroke="#107010" stroke-width="1"/>
</svg>
<div class="a" style="left:33px;top:936px;width:189px;height:21px;background:#fff;border:1px solid #a0a0a0"></div>
<div class="t" style="left:37px;top:942px;font-size:11px;color:#111">203</div>
<div class="a" style="left:33px;top:977px;width:189px;height:21px;background:#fff;border:1px solid #a0a0a0"></div>
<div class="t" style="left:37px;top:983px;font-size:11px;color:#111">210</div>
<svg class="a" style="left:205px;top:937px" width="16" height="62" viewBox="205 937 16 62">
  <rect x="206.5" y="938.5" width="13" height="7.5" fill="#f6f6f6" stroke="#a8a8a8"/>
  <rect x="206.5" y="946.5" width="13" height="7.5" fill="#f6f6f6" stroke="#a8a8a8"/>
  <path d="M210,944 L213,941 L216,944 Z M210,948.5 L213,951.5 L216,948.5 Z" fill="#3a64b0"/>
  <rect x="206.5" y="979.5" width="13" height="7.5" fill="#f6f6f6" stroke="#a8a8a8"/>
  <rect x="206.5" y="987.5" width="13" height="7.5" fill="#f6f6f6" stroke="#a8a8a8"/>
  <path d="M210,985 L213,982 L216,985 Z M210,989.5 L213,992.5 L216,989.5 Z" fill="#3a64b0"/>
</svg>
<div class="a" style="left:33px;top:957px;width:189px;height:8px;background:linear-gradient(90deg,#26c8ee 0%,#5ccaea 40%,#b8d4ea 75%,#f8d8f0 100%);border:1px solid #8ec4f0;border-top:none"></div>
<svg class="a" style="left:175px;top:955px" width="12" height="14" viewBox="175 955 12 14">
  <path d="M178.5,967.5 V960 L181,957 L183.5,960 V967.5 Z" fill="#fff" stroke="#2a9a3a" stroke-width="1"/>
</svg>
<div class="a" style="left:33px;top:998px;width:189px;height:8px;background:linear-gradient(90deg,#c818f0 0%,#c850ec 40%,#c8b0ec 75%,#c8f8f0 100%)"></div>
<svg class="a" style="left:180px;top:996px" width="12" height="10" viewBox="180 996 12 10">
  <path d="M183.5,1006 V1001 L186,998 L188.5,1001 V1006 Z" fill="#fff" stroke="#2a9a3a" stroke-width="1"/>
</svg>

<!-- splitter handle -->
<div class="a" style="left:246px;top:542px;width:9px;height:39px;background:#f7f7f7;border:1px solid #8c8c8c;border-left:none"></div>
<div class="a" style="left:247px;top:558px;width:5px;height:5px;border-radius:50%;background:#d8d8d8;border:1px solid #a0a0a0"></div>
<svg class="a" style="left:230px;top:582px" width="12" height="12" viewBox="230 582 12 12">
  <path d="M232,584.5 H239 M232,587.5 H239 M232,590.5 H239" stroke="#555" stroke-width="1"/>
</svg>

<svg class="a" style="left:0;top:0" width="1152" height="1041" viewBox="0 0 1152 1041">
  <polygon points="297.2,604.6 929.7,776.6 929.7,788.6 297.2,616.6" fill="#939393"/>
  <polygon points="929.7,776.6 1152,559 1152,571 929.7,788.6" fill="#444444"/>
  <polyline points="297.2,604.6 297.2,616.6 929.7,788.6 1152,571" fill="none" stroke="#000" stroke-width="1.3"/>
  <line x1="929.7" y1="776.6" x2="929.7" y2="788.6" stroke="#000" stroke-width="1.2"/>
  <polygon points="630.6,278 1152,419.8 1152,559 929.7,776.6 297.2,604.6" fill="#9ea2b8"/>
  <polyline points="1152,419.8 630.6,278 297.2,604.6 929.7,776.6 1152,559" fill="none" stroke="#3a9bff" stroke-width="1.7" stroke-linejoin="miter"/>
</svg>

<!-- flyout tree -->
<div class="a" style="left:247px;top:140px;width:199px;height:30px;background:#fff;border-right:2.5px solid #000;border-bottom:2.5px solid #000"></div>
<svg class="a" style="left:250px;top:148px" width="10" height="12" viewBox="250 148 10 12"><path d="M252,151 L256.5,154.5 L252,158 Z" fill="#1a1a22"/></svg>
<svg class="a" style="left:266px;top:143px" width="24" height="24" viewBox="266 143 24 24">
  <g transform="translate(266,143) scale(1.0)" stroke="#1e1e1e" stroke-width="1.05" stroke-linejoin="round">
    <path d="M4.4,8.3 L6,7.4 L7.4,6.9 L7.6,4.6 L12.2,3.2 L14.7,4.1 L16.6,5.1 L16.6,9.2 L18.4,10.4 L20.5,11.3 L20.5,17.5 L15.2,20.3 L4.4,12.7 Z" fill="#ececec"/>
    <path d="M7.6,4.6 L11,6.3 L16.6,5.1 L12.2,3.2 Z" fill="#f8f8f8" stroke-width="0.70"/>
    <path d="M11,11.3 L16.6,9.2 L20.5,11.3 L15,13.4 Z" fill="#fafafa" stroke-width="0.70"/>
    <path d="M15,13.4 L20.5,11.3 V17.5 L15.2,20.3 Z" fill="#f4f4f4" stroke-width="0.70"/>
    <path d="M11,6.3 V11.3 M15,13.4 V20.3 M7.4,6.9 V9.8" fill="none" stroke="#777" stroke-width="0.80"/>
  </g>
</svg>
<div class="t" style="left:292px;top:150px;font-size:12px;color:#111;transform:scaleX(0.98);transform-origin:0 0">Part1  (Default&lt;&#8201;&lt;Default...</div>

<!-- view toolbar -->
<svg class="a" style="left:910px;top:118px" width="242" height="30" viewBox="910 118 242 30">
  <defs>
    <linearGradient id="vb" x1="0" y1="0" x2="1" y2="1"><stop offset="0" stop-color="#a8dcf4"/><stop offset="1" stop-color="#3a8cc4"/></linearGradient>
  </defs>
  <!-- zoom to fit -->
  <circle cx="932" cy="129.5" r="5.8" fill="#fff" stroke="#555" stroke-width="1"/>
  <path d="M932,125.5 L933.3,127 H930.7Z M932,133.5 L933.3,132 H930.7Z M928,129.5 L929.5,128.2 V130.8Z M936,129.5 L934.5,128.2 V130.8Z" fill="#555"/>
  <path d="M921.5,141 L927.5,134.5" stroke="#4a88b8" stroke-width="3" stroke-linecap="round"/>
  <!-- zoom to area -->
  <rect x="951.5" y="123.5" width="13" height="13" fill="none" stroke="#333" stroke-dasharray="2,1.5"/>
  <circle cx="956" cy="131" r="6" fill="#f2f2f2" stroke="#666" stroke-width="1"/>
  <path d="M946.5,141 L952,135.5" stroke="#4a88b8" stroke-width="3" stroke-linecap="round"/>
  <!-- previous view -->
  <path d="M974,137 L986,126 L990,130 L978,141 Z" fill="#e8e8e8" stroke="#555" stroke-width="0.9"/>
  <ellipse cx="976" cy="139" rx="2.5" ry="3" fill="#ccc" stroke="#555" stroke-width="0.8" transform="rotate(45 976 139)"/>
  <path d="M981,138 H990" stroke="#3a7ab0" stroke-width="2.2"/><path d="M983,134.5 L979,138 L983,141.5 Z" fill="#3a7ab0"/>
  <!-- section view disabled -->
  <path d="M998.5,127 C1002,124 1012,124 1016,127 V140 L1012,141 V130 H1003 V141 L998.5,140 Z" fill="#eee" stroke="#d0d0d0" stroke-width="1"/>
  <path d="M1000,133 L1002,131 M1000,137 L1002,135 M1013,133 L1015,131 M1013,137 L1015,135" stroke="#d0d0d0"/>
  <!-- view orientation -->
  <path d="M1026.5,128.5 L1031,125 L1042.5,127 V139 L1036,142.5 L1026.5,140 Z" fill="#f5f5f5" stroke="#555" stroke-width="0.9"/>
  <path d="M1031,130 L1042.5,127 V139 L1036,142.5 L1031,141 Z" fill="url(#vb)" stroke="#555" stroke-width="0.8"/>
  <path d="M1035,122.5 V128 M1033,126 L1035,128 L1037,126" stroke="#333" stroke-width="1" fill="none"/>
  <path d="M1024,134 H1029 M1027,132 L1029,134 L1027,136" stroke="#333" stroke-width="1" fill="none"/>
  <path d="M1050.5,132 h5 l-2.5,2.5z" fill="#888"/>
  <!-- display style -->
  <path d="M1065.5,127 L1070,123.5 L1082.5,125.5 V139.5 L1078,143 L1065.5,141 Z" fill="url(#vb)" stroke="#444" stroke-width="0.9"/>
  <path d="M1070,127.5 L1082.5,125.5 M1070,127.5 V143" stroke="#444" stroke-width="0.8" fill="none"/>
  <path d="M1076,127 L1082,126 V139.5 L1077,142.5 Z" fill="#fafafa"/>
  <path d="M1089.5,132 h5 l-2.5,2.5z" fill="#888"/>
  <!-- hide/show -->
  <path d="M1104,133 C1108,126 1118,126 1122,133 C1118,140 1108,140 1104,133 Z" fill="#e8e8e8" stroke="#888" stroke-width="1"/>
  <circle cx="1113" cy="133" r="4" fill="#555"/>
  <path d="M1113,126 V141" stroke="#333" stroke-width="1"/>
  <path d="M1129.5,132 h5 l-2.5,2.5z" fill="#888"/>
  <!-- last partial -->
  <ellipse cx="1152" cy="132" rx="9" ry="8" fill="#eaeaea" stroke="#d8d8d8"/>
</svg>

<!-- center mark on face -->
<svg class="a" style="left:552px;top:434px" width="14" height="14" viewBox="552 434 14 14"><path d="M559.5,438 V445 M556,441.5 H563" stroke="#59a9f0" stroke-width="1"/></svg>
<!-- origin -->
<svg class="a" style="left:770px;top:505px" width="32" height="45" viewBox="770 505 32 45">
  <path d="M780.5,518 V539.5 L788,542" stroke="#0000ff" stroke-width="1.3" fill="none"/>
  <path d="M780.5,511.5 L783.5,519 H777.5 Z" fill="#0000ff"/>
  <path d="M786,539.5 L795,543.5 L786,544.8 Z" fill="#0000ff"/>
  <path d="M777.5,536.5 L783.5,542.5 M783.5,536.5 L777.5,542.5 M777,539.5 H784" stroke="#0000ff" stroke-width="0.9"/>
</svg>

<!-- triad -->
<svg class="a" style="left:262px;top:908px" width="64" height="64" viewBox="262 908 64 64">
  <defs>
    <linearGradient id="ga" x1="0" y1="0" x2="1" y2="0"><stop offset="0" stop-color="#1e7a1e"/><stop offset="0.5" stop-color="#8ad88a"/><stop offset="1" stop-color="#1e6e1e"/></linearGradient>
  </defs>
  <path d="M287,948 V930" stroke="#146a14" stroke-width="3.5"/>
  <path d="M287,923 L291,931.5 L287,932.5 L283,931.5 Z" fill="url(#ga)"/>
  <path d="M287,948 L305,952.5" stroke="#c01c10" stroke-width="3.5"/>
  <path d="M314,955 L304,949.5 L303.5,957 Z" fill="#e84a3a"/>
  <path d="M287,948 L278,956" stroke="#10108a" stroke-width="3.5"/>
  <path d="M273.5,955 L279,954.5 L281,959 L276,961.5 Z" fill="#1818c8"/>
  <path d="M283.5,912.5 L286.5,916 L289.5,912.5 M286.5,916 V921" stroke="#0a8a0a" stroke-width="0.9" fill="none"/>
  <path d="M314.5,951.5 L319,959.5 M319,951.5 L314.5,959.5" stroke="#ee1010" stroke-width="0.9"/>
  <path d="M268,959.5 H273 L269,967.5 H274" stroke="#1010ee" stroke-width="0.9" fill="none"/>
</svg>
<div class="t" style="left:258px;top:990px;font-size:13.5px;font-weight:bold;color:#111">*Trimetric</div>

<div id="btabs" class="a"></div>
<div class="a" style="left:2px;top:1006px;width:65px;height:15px;background:#a2a2a2;border-top:1px solid #222"></div>
<svg class="a" style="left:2px;top:1006px" width="66" height="15" viewBox="2 1006 66 15">
  <path d="M18.5,1007 V1020 M34.5,1007 V1020 M50.5,1007 V1020" stroke="#c8c8c8" stroke-width="1"/>
  <path d="M66,1007 V1021" stroke="#fff" stroke-width="1.5"/>
  <g fill="#7e7e7e">
    <path d="M7,1009 H8.5 V1018 H7Z M13,1009 V1018 L9,1013.5Z"/>
    <path d="M29,1009 V1018 L24.5,1013.5Z"/>
    <path d="M40,1009 V1018 L44.5,1013.5Z"/>
    <path d="M55,1009 V1018 L59,1013.5Z M60,1009 H61.5 V1018 H60Z"/>
  </g>
</svg>
<div class="a" style="left:67px;top:1006px;width:58px;height:15px;background:#fcfcfc"></div>
<div class="t" style="left:80px;top:1007px;font-size:12px;font-weight:bold;color:#111">Model</div>
<div class="a" style="left:125px;top:1007px;width:104px;height:14px;background:#d2d2d2;border:1px solid #8c8c8c;border-top:1px solid #b0b0b0"></div>
<div class="t" style="left:134px;top:1007px;font-size:12px;color:#222">Motion Study 1</div>
<div id="status" class="a"></div>
<div class="t" style="left:2px;top:1026px;font-size:12px;color:#333;transform:scaleX(0.985);transform-origin:0 0">Select entities to modify their appearance</div>


</body></html>
